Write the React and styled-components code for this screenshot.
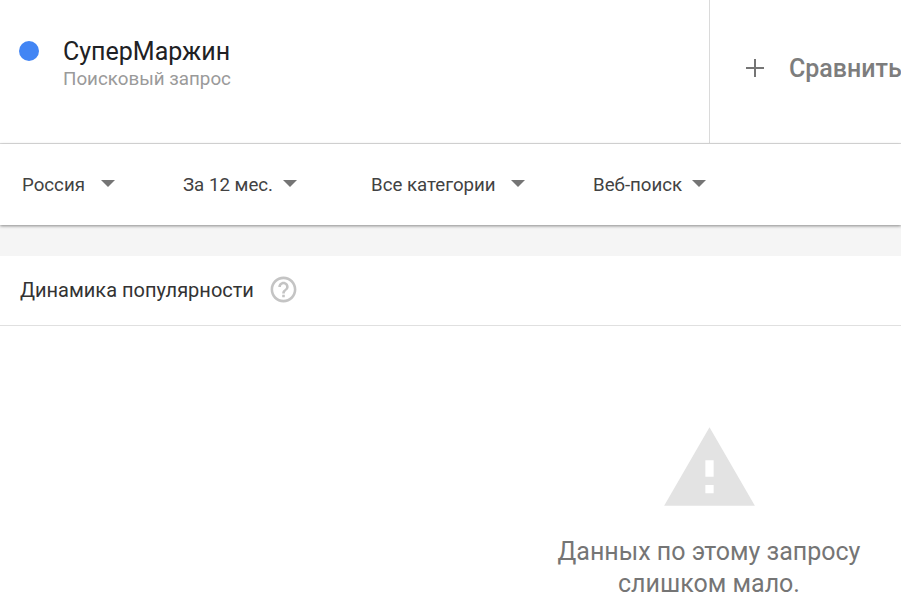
import React from 'react';
import styled, { createGlobalStyle } from 'styled-components';

const GlobalStyle = createGlobalStyle`
  html, body {
    margin: 0;
    padding: 0;
    background: #fff;
    font-family: Roboto, "Liberation Sans", sans-serif;
    overflow: hidden;
  }
`;

const Page = styled.div`
  width: 901px;
  height: 601px;
  overflow: hidden;
  background: #fff;
`;

const Header = styled.div`
  display: flex;
  height: 143px;
  border-bottom: 1px solid #e0e0e0;
`;

const TermCell = styled.div`
  width: 710px;
  flex-shrink: 0;
  display: flex;
  padding: 39px 0 0 19px;
  box-sizing: border-box;
  border-right: 1px solid #dadada;
`;

const Dot = styled.span`
  width: 20px;
  height: 20px;
  margin-top: 2px;
  border-radius: 50%;
  background: #4285f4;
`;

const TermText = styled.div`
  margin-left: 24px;
`;

const TermName = styled.div`
  font-size: 25px;
  line-height: 26px;
  color: #202124;
`;

const TermKind = styled.div`
  font-size: 18.8px;
  line-height: 20px;
  margin-top: 4px;
  color: #9a9a9a;
`;

const CompareCell = styled.div`
  display: flex;
  align-items: center;
  height: 136px;
  padding-left: 35px;
  white-space: nowrap;
  font-size: 25px;
  font-weight: 500;
  color: #7d7d7d;
`;

const CompareLabel = styled.span`
  margin-left: 24px;
`;

const Filters = styled.div`
  display: flex;
  align-items: center;
  height: 81px;
  padding: 0 0 0 22px;
  box-sizing: border-box;
  position: relative;
  background: #fff;
  box-shadow: 0 1px 3px rgba(0, 0, 0, 0.45);
`;

const Filter = styled.div`
  display: flex;
  align-items: center;
  width: ${(p) => p.$width}px;
  flex-shrink: 0;
  font-size: 18.7px;
  color: #424242;
`;

const Caret = styled.span`
  width: 0;
  height: 0;
  margin-left: ${(p) => p.$gap}px;
  margin-top: -3px;
  border-left: 7px solid transparent;
  border-right: 7px solid transparent;
  border-top: 7px solid #757575;
`;

const Band = styled.div`
  height: 31px;
  background: #f5f5f5;
`;

const CardHeader = styled.div`
  display: flex;
  align-items: center;
  height: 70px;
  padding: 0 0 2px 20px;
  box-sizing: border-box;
  border-bottom: 1px solid #e0e0e0;
  font-size: 20px;
  color: #333;
`;

const HelpIcon = styled.svg`
  width: 31px;
  height: 31px;
  margin-left: 14px;
  color: #c4c4c4;
`;

const Empty = styled.div`
  width: 1418px;
  display: flex;
  flex-direction: column;
  align-items: center;
  padding-top: 93px;
`;

const WarnIcon = styled.svg`
  width: 99px;
  height: 99px;
  fill: #e3e3e3;
`;

const EmptyText = styled.div`
  margin-top: 18px;
  font-size: 25px;
  line-height: 32px;
  text-align: center;
  color: #757575;
`;

const filters = [
  { label: 'Россия', width: 161, gap: 16 },
  { label: 'За 12 мес.', width: 188, gap: 10 },
  { label: 'Все категории', width: 222, gap: 15 },
  { label: 'Веб-поиск', width: 140, gap: 10 },
];

export default function App() {
  return (
    <Page>
      <GlobalStyle />
      <Header>
        <TermCell>
          <Dot />
          <TermText>
            <TermName>СуперМаржин</TermName>
            <TermKind>Поисковый запрос</TermKind>
          </TermText>
        </TermCell>
        <CompareCell>
          <svg width="20" height="20" viewBox="0 0 20 20">
            <path d="M10 1v18M1 10h18" stroke="#757575" strokeWidth="2" fill="none" />
          </svg>
          <CompareLabel>Сравнить</CompareLabel>
        </CompareCell>
      </Header>
      <Filters>
        {filters.map((f) => (
          <Filter key={f.label} $width={f.width}>
            {f.label}
            <Caret $gap={f.gap} />
          </Filter>
        ))}
      </Filters>
      <Band />
      <CardHeader>
        Динамика популярности
        <HelpIcon viewBox="0 0 24 24" fill="currentColor">
          <path d="M11 18h2v-2h-2v2zm1-16C6.48 2 2 6.48 2 12s4.48 10 10 10 10-4.48 10-10S17.52 2 12 2zm0 18c-4.41 0-8-3.59-8-8s3.59-8 8-8 8 3.59 8 8-3.59 8-8 8zm0-14c-2.21 0-4 1.79-4 4h2c0-1.1.9-2 2-2s2 .9 2 2c0 2-3 1.75-3 5h2c0-2.25 3-2.5 3-5 0-2.21-1.79-4-4-4z" />
        </HelpIcon>
      </CardHeader>
      <Empty>
        <WarnIcon viewBox="0 0 24 24">
          <path d="M1 21h22L12 2 1 21zm12-3h-2v-2h2v2zm0-4h-2v-4h2v4z" />
        </WarnIcon>
        <EmptyText>
          Данных по этому запросу
          <br />
          слишком мало.
        </EmptyText>
      </Empty>
    </Page>
  );
}
